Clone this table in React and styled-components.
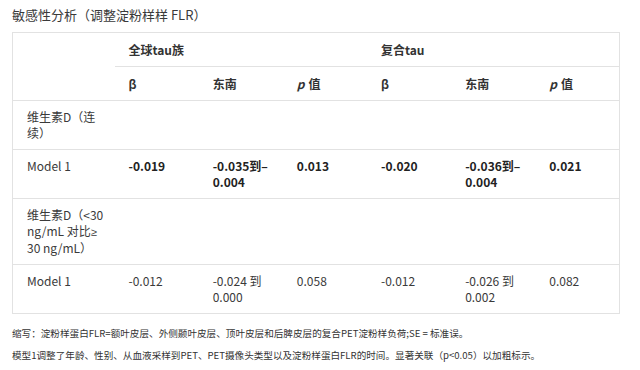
import React from "react";
import styled, { createGlobalStyle } from "styled-components";

const Global = createGlobalStyle`
  html, body { margin: 0; padding: 0; background: #fff; }
  body { font-family: "Noto Sans CJK SC", "Noto Sans", sans-serif; color: #333; }
`;

const Page = styled.div`
  padding: 6px 20px 0 12px;
  width: 608px;
`;

const Title = styled.h2`
  margin: 0 0 8px;
  font-size: 13px;
  font-weight: 400;
  line-height: 18px;
  color: #3a3a3a;
`;

const Table = styled.table`
  width: 608px;
  border-collapse: collapse;
  table-layout: fixed;
  border: 1px solid #e2e2e2;
  font-size: 12px;
  line-height: 16px;
`;

const Cell = styled.td`
  padding: 8px 14px 8px;
  text-align: left;
  vertical-align: top;
  font-weight: ${(p) => (p.$bold ? 700 : 400)};
  color: ${(p) => (p.$bold ? "#222" : "#3a3a3a")};
  border-bottom: 1px solid #e2e2e2;
`;

const Line = styled.span`
  display: block;
  white-space: nowrap;
`;

const Narrow = styled.span`
  font-family: "Noto Sans", sans-serif;
  font-size: 11px;
`;

const Head = styled(Cell).attrs({ as: "th" })`
  font-weight: 700;
  color: #333;
  vertical-align: middle;
  padding: 9px 14px 8px;
`;

const Italic = styled.i`
  margin-right: 4px;
`;

const Footnotes = styled.div`
  margin-top: 11px;
  font-size: 9.6px;
  line-height: 16px;
  color: #333;
`;

const Note = styled.p`
  margin: 0 0 6px;
`;

const P = () => (
  <>
    <Italic>p</Italic>值
  </>
);

const rows = [
  { label: ["维生素D（连", "续）"] },
  {
    label: ["Model 1"],
    bold: true,
    vals: ["-0.019", "-0.035到–0.004", "0.013", "-0.020", "-0.036到–0.004", "0.021"],
  },
  {
    label: [
      "维生素D（<30",
      <>
        ng/mL 对比<Narrow>≥</Narrow>
      </>,
      "30 ng/mL）",
    ],
  },
  {
    label: ["Model 1"],
    vals: ["-0.012", "-0.024 到 0.000", "0.058", "-0.012", "-0.026 到 0.002", "0.082"],
  },
];

export default function App() {
  return (
    <>
      <Global />
      <Page>
        <Title>敏感性分析（调整淀粉样样 FLR）</Title>
        <Table>
          <colgroup>
            <col style={{ width: 102 }} />
            <col />
            <col />
            <col />
            <col />
            <col />
            <col />
          </colgroup>
          <thead>
            <tr>
              <Head rowSpan={2}></Head>
              <Head colSpan={3}>全球tau族</Head>
              <Head colSpan={3}>复合tau</Head>
            </tr>
            <tr>
              <Head>β</Head>
              <Head>东南</Head>
              <Head>
                <P />
              </Head>
              <Head>β</Head>
              <Head>东南</Head>
              <Head>
                <P />
              </Head>
            </tr>
          </thead>
          <tbody>
            {rows.map((r, i) => (
              <tr key={i}>
                <Cell>
                  {r.label.map((l, k) => (
                    <Line key={k}>{l}</Line>
                  ))}
                </Cell>
                {(r.vals || ["", "", "", "", "", ""]).map((v, j) => (
                  <Cell key={j} $bold={r.bold}>
                    {v}
                  </Cell>
                ))}
              </tr>
            ))}
          </tbody>
        </Table>
        <Footnotes>
          <Note>缩写：淀粉样蛋白FLR=额叶皮层、外侧颞叶皮层、顶叶皮层和后脾皮层的复合PET淀粉样负荷;SE = 标准误。</Note>
          <Note>模型1调整了年龄、性别、从血液采样到PET、PET摄像头类型以及淀粉样蛋白FLR的时间。显著关联（p&lt;0.05）以加粗标示。</Note>
        </Footnotes>
      </Page>
    </>
  );
}
